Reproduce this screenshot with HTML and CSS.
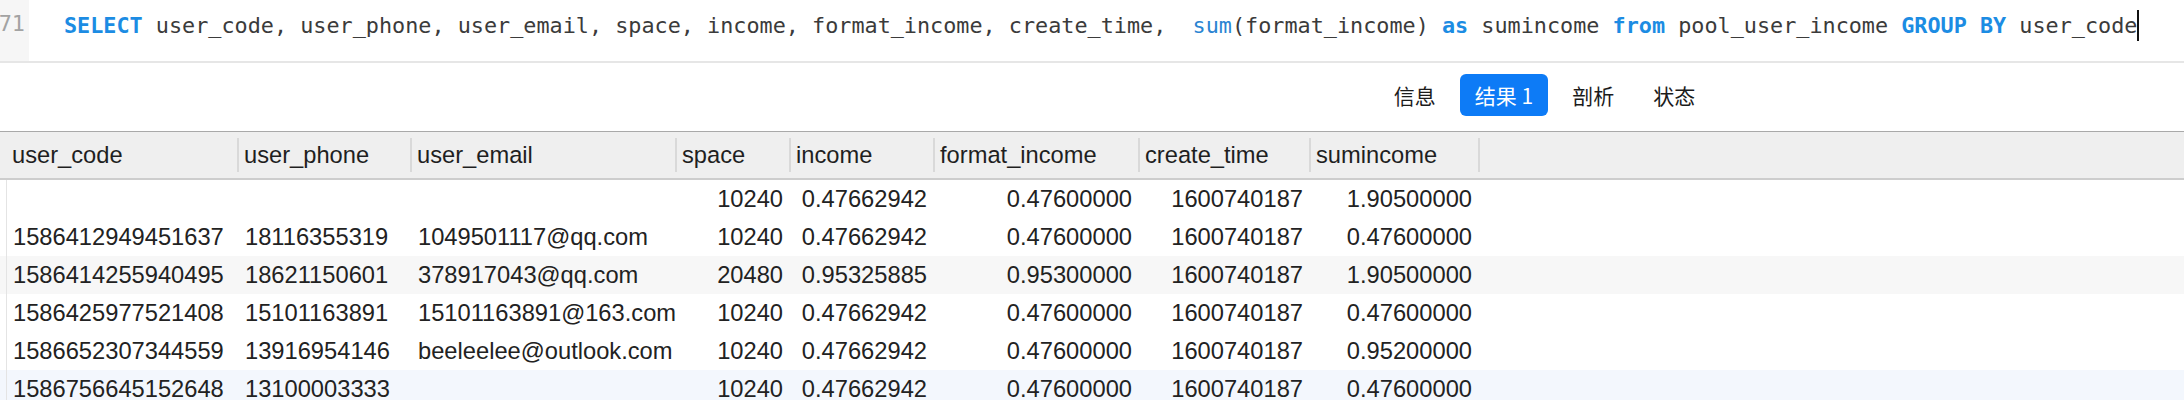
FILE: index.html
```html
<!DOCTYPE html>
<html lang="zh">
<head>
<meta charset="utf-8">
<title>Query</title>
<link rel="stylesheet" href="styles.css">
</head>
<body>
<div class="editor">
  <div class="gutter"><span class="lineno">71</span></div>
  <div class="code"><span class="kw">SELECT</span> user_code, user_phone, user_email, space, income, format_income, create_time,  <span class="fn">sum</span>(format_income) <span class="kw">as</span> sumincome <span class="kw">from</span> pool_user_income <span class="kw">GROUP BY</span> user_code<span class="caret"></span></div>
</div>
<div class="tabbar">
  <div class="tab">信息</div>
  <div class="tab active">结果 1</div>
  <div class="tab">剖析</div>
  <div class="tab">状态</div>
</div>
<div class="grid">
  <div class="row head">
    <div class="lead"></div>
    <div class="hc"><span>user_code</span></div>
    <div class="hc"><span>user_phone</span></div>
    <div class="hc"><span>user_email</span></div>
    <div class="hc"><span>space</span></div>
    <div class="hc"><span>income</span></div>
    <div class="hc"><span>format_income</span></div>
    <div class="hc"><span>create_time</span></div>
    <div class="hc"><span>sumincome</span></div>
    <div class="hfill"></div>
  </div>
  <div class="row">
    <div class="lead"></div>
    <div class="c"></div><div class="c"></div><div class="c"></div>
    <div class="c n">10240</div><div class="c n">0.47662942</div><div class="c n">0.47600000</div><div class="c n">1600740187</div><div class="c n">1.90500000</div><div class="c"></div>
  </div>
  <div class="row">
    <div class="lead"></div>
    <div class="c">1586412949451637</div><div class="c">18116355319</div><div class="c">1049501117@qq.com</div>
    <div class="c n">10240</div><div class="c n">0.47662942</div><div class="c n">0.47600000</div><div class="c n">1600740187</div><div class="c n">0.47600000</div><div class="c"></div>
  </div>
  <div class="row alt">
    <div class="lead"></div>
    <div class="c">1586414255940495</div><div class="c">18621150601</div><div class="c">378917043@qq.com</div>
    <div class="c n">20480</div><div class="c n">0.95325885</div><div class="c n">0.95300000</div><div class="c n">1600740187</div><div class="c n">1.90500000</div><div class="c"></div>
  </div>
  <div class="row">
    <div class="lead"></div>
    <div class="c">1586425977521408</div><div class="c">15101163891</div><div class="c">15101163891@163.com</div>
    <div class="c n">10240</div><div class="c n">0.47662942</div><div class="c n">0.47600000</div><div class="c n">1600740187</div><div class="c n">0.47600000</div><div class="c"></div>
  </div>
  <div class="row">
    <div class="lead"></div>
    <div class="c">1586652307344559</div><div class="c">13916954146</div><div class="c">beeleelee@outlook.com</div>
    <div class="c n">10240</div><div class="c n">0.47662942</div><div class="c n">0.47600000</div><div class="c n">1600740187</div><div class="c n">0.95200000</div><div class="c"></div>
  </div>
  <div class="row sel">
    <div class="lead"></div>
    <div class="c">1586756645152648</div><div class="c">13100003333</div><div class="c"></div>
    <div class="c n">10240</div><div class="c n">0.47662942</div><div class="c n">0.47600000</div><div class="c n">1600740187</div><div class="c n">0.47600000</div><div class="c"></div>
  </div>
</div>
</body>
</html>
```
FILE: styles.css
```css
html, body {
  margin: 0;
  padding: 0;
  background: #ffffff;
  overflow: hidden;
}

.editor {
  display: flex;
  height: 61px;
  border-bottom: 2px solid #e6e6e6;
}

.gutter {
  width: 29px;
  flex: none;
  background: #f6f6f6;
  overflow: hidden;
  display: flex;
  justify-content: flex-end;
  padding-right: 4px;
  box-sizing: border-box;
}

.lineno {
  font-family: "DejaVu Sans Mono", monospace;
  font-size: 21.8px;
  line-height: 28px;
  padding-top: 10px;
  color: #a3a3a3;
  white-space: nowrap;
}

.code {
  padding-left: 35px;
  padding-top: 10px;
  font-family: "DejaVu Sans Mono", monospace;
  font-size: 21.8px;
  line-height: 28px;
  color: #3b3b3b;
  white-space: pre;
}

.code .kw {
  color: #1c8ce3;
  font-weight: bold;
}

.code .fn {
  color: #2a84d2;
}

.caret {
  display: inline-block;
  width: 2px;
  height: 31px;
  vertical-align: -8px;
  background: #111;
}

.tabbar {
  display: flex;
  justify-content: center;
  gap: 9px;
  padding: 11px 0 15px 905px;
  border-bottom: 1px solid #a9a9a9;
}

.tab {
  height: 42px;
  padding: 0 15px;
  display: flex;
  align-items: center;
  border-radius: 6px;
  font-family: "Noto Sans CJK SC", "Liberation Sans", sans-serif;
  font-size: 21px;
  color: #1b1b1b;
  white-space: pre;
}

.tab.active {
  background: #0d7bf6;
  color: #ffffff;
}

.grid {
  font-family: "Liberation Sans", Arial, sans-serif;
  font-size: 23.7px;
  color: #222222;
}

.row {
  display: grid;
  grid-template-columns: 7px 232px 173px 265px 114px 144px 205px 171px 169px 1fr;
  height: 38px;
}

.row.head {
  height: 46px;
  background: #efefef;
  border-bottom: 2px solid #cdcdcd;
}

.row.alt {
  background: #f7f7f7;
}

.row.sel {
  background: #f3f7fd;
}

.row:not(.head) .lead {
  border-right: 1px solid #e4e4e4;
}

.hc {
  padding: 6px 0;
  display: flex;
}

.hc span {
  flex: 1;
  display: flex;
  align-items: center;
  padding-left: 5px;
  border-right: 2px solid #d9d9d9;
  white-space: nowrap;
  color: #1f1f1f;
}

.c {
  display: flex;
  align-items: center;
  padding: 0 6px 0 6px;
  white-space: nowrap;
  overflow: hidden;
}

.c.n {
  justify-content: flex-end;
  padding-right: 8px;
}
```
